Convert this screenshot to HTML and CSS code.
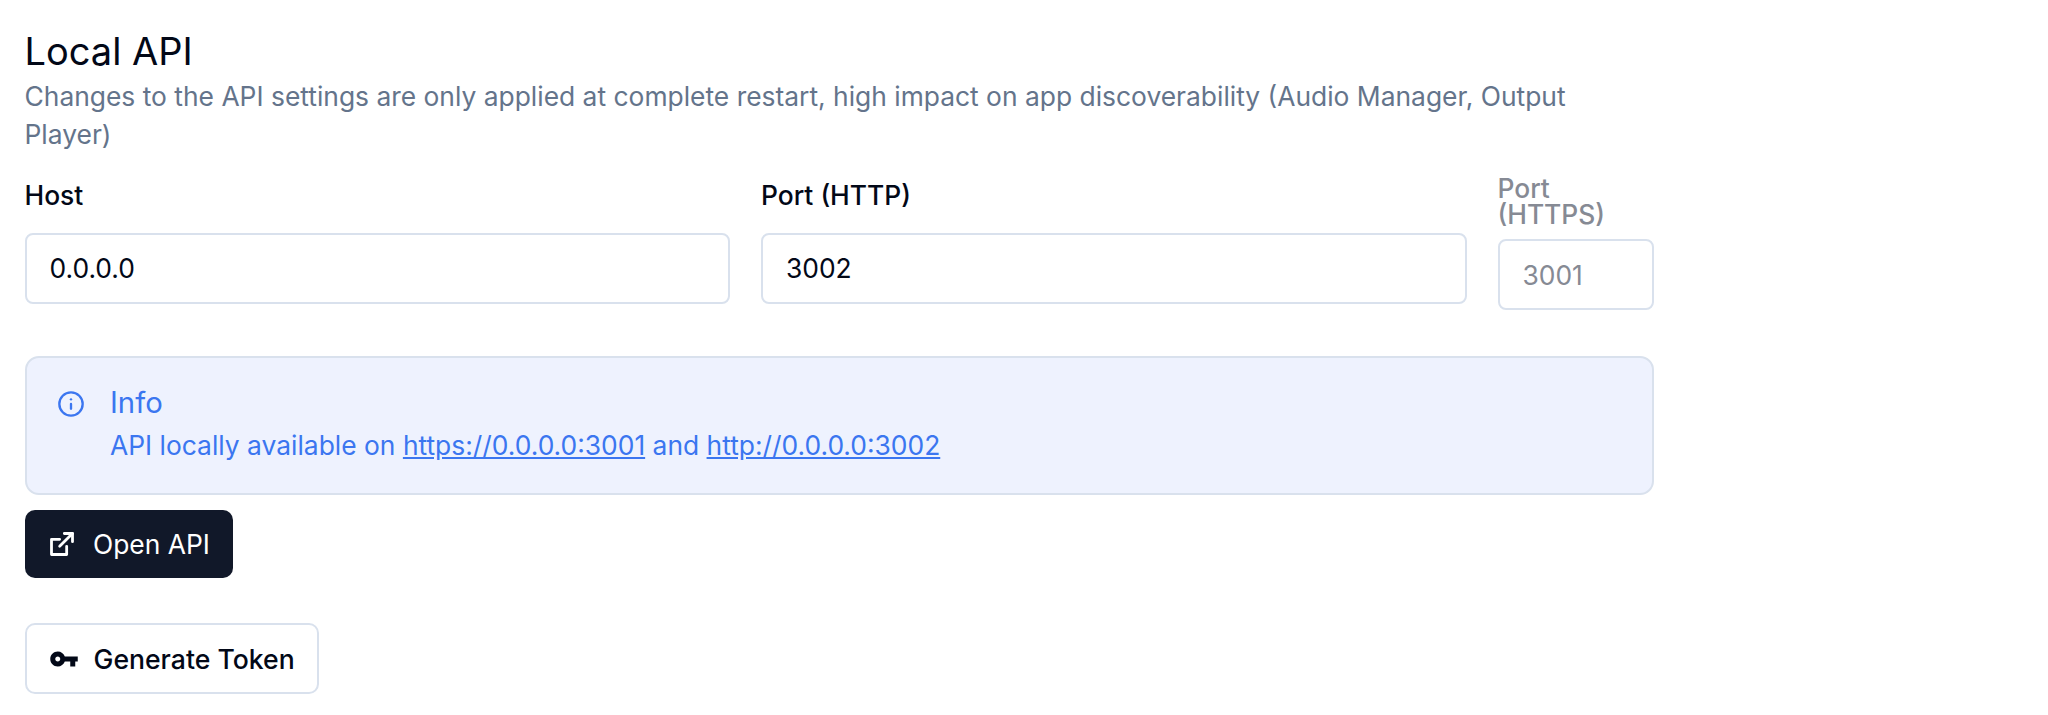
FILE: index.html
```html
<!DOCTYPE html>
<html lang="en">
<head>
<meta charset="utf-8">
<title>Local API</title>
<link rel="stylesheet" href="styles.css">
</head>
<body>
<main class="panel">
  <h2 class="title">Local API</h2>
  <p class="desc">Changes to the API settings are only applied at complete restart, high impact on app discoverability (Audio Manager, Output Player)</p>
  <div class="fields">
    <div class="field">
      <label class="label">Host</label>
      <div class="input">0.0.0.0</div>
    </div>
    <div class="field">
      <label class="label">Port (HTTP)</label>
      <div class="input">3002</div>
    </div>
    <div class="field field-disabled">
      <label class="label">Port (HTTPS)</label>
      <div class="input">3001</div>
    </div>
  </div>
  <div class="alert">
    <svg class="alert-icon" viewBox="0 0 24 24" fill="none" stroke="currentColor" stroke-width="2" stroke-linecap="round" stroke-linejoin="round"><circle cx="12" cy="12" r="10"/><path d="M12 16v-4"/><path d="M12 8h.01"/></svg>
    <div class="alert-body">
      <div class="alert-title">Info</div>
      <div class="alert-text">API locally available on <a href="#">https://0.0.0.0:3001</a> and <a href="#">http://0.0.0.0:3002</a></div>
    </div>
  </div>
  <button class="btn btn-dark" type="button">
    <svg class="btn-icon" viewBox="0 0 24 24" fill="none" stroke="currentColor" stroke-width="2.4" stroke-linecap="round" stroke-linejoin="round"><path d="M16 14v7H3V8h7"/><path d="M14 3h7v7"/><path d="M21 3 10 14"/></svg>
    <span>Open API</span>
  </button>
  <button class="btn btn-outline" type="button">
    <svg class="key-icon" viewBox="0 0 24 24" fill="currentColor"><path d="M12.65 10C11.83 7.67 9.61 6 7 6c-3.31 0-6 2.69-6 6s2.69 6 6 6c2.61 0 4.83-1.67 5.65-4H17v4h4v-4h2v-4H12.65zM7 14c-1.1 0-2-.9-2-2s.9-2 2-2 2 .9 2 2-.9 2-2 2z"/></svg>
    <span>Generate Token</span>
  </button>
</main>
</body>
</html>
```
FILE: styles.css
```css
* { box-sizing: border-box; }
html, body { margin: 0; background: #fff; }
body { font-family: Inter, "Liberation Sans", sans-serif; color: #020817; }
.panel { width: 1654px; padding: 26.5px 0 0 24.5px; }
.title { margin: 0; font-size: 38px; line-height: 48px; font-weight: 400; }
.desc { margin: 2.5px 0 0; width: 1600px; font-size: 26.4px; line-height: 38px; color: #64748b; }
.fields { display: grid; grid-template-columns: 705.5px 705.5px 156px; column-gap: 31px; align-items: center; margin-top: 22px; }
.field { display: flex; flex-direction: column; gap: 25px; }
.label { font-size: 26.4px; line-height: 26px; font-weight: 500; }
.input { height: 71px; border: 2px solid #d9e1ed; border-radius: 8px; padding: 0 23px; display: flex; align-items: center; font-size: 26.4px; }
.field-disabled { gap: 12px; color: #868a94; }
.alert { display: flex; gap: 25.5px; margin-top: 46px; height: 139px; width: 1629px; padding: 26.5px 30px; background: #eef2fe; border: 2px solid #d9e1ed; border-radius: 14px; color: #3b76f0; }
.alert-icon { width: 28px; height: 28px; flex: none; margin-top: 5px; }
.alert-title { font-size: 29.3px; line-height: 36px; font-weight: 400; }
.alert-text { margin-top: 3.5px; font-size: 26.4px; line-height: 42px; }
.alert-text a { color: inherit; }
.btn { display: flex; align-items: center; justify-content: flex-start; white-space: nowrap; font: inherit; font-size: 26.4px; border-radius: 10px; cursor: pointer; }
.btn-icon { width: 28px; height: 28px; flex: none; }
.key-icon { width: 30px; height: 30px; flex: none; }
.btn-dark { margin-top: 15px; height: 68px; width: 208px; padding: 0 0 0 23.5px; gap: 17px; background: #111829; color: #fff; border: 0; }
.btn-outline { margin-top: 45px; height: 71px; width: 294px; padding: 0 0 0 22px; gap: 15px; background: #fff; color: #020817; border: 2px solid #d9e1ed; font-size: 26.6px; font-weight: 500; }
```
